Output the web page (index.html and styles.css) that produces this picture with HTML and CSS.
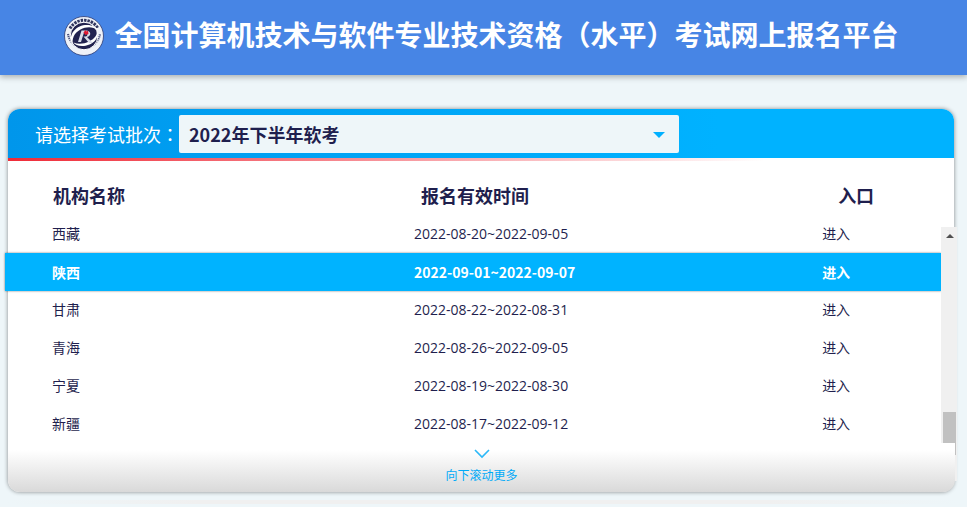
FILE: index.html
```html
<!DOCTYPE html>
<html lang="zh-CN">
<head>
    <meta charset="UTF-8">
    <meta name="viewport" content="width=device-width, initial-scale=1.0">
    <title>全国计算机技术与软件专业技术资格（水平）考试网上报名平台</title>
    <link rel="stylesheet" href="styles.css">
</head>

<body>
    <header class="site-header">
        <svg class="logo" viewBox="0 0 40 40" aria-hidden="true">
            <circle cx="20" cy="20" r="19.5" fill="#eef1f8" stroke="#2c3a72" stroke-width="0.8"/>
            <path d="M6 12.500A16 16 0 0 1 34 12.500" fill="none" stroke="#33375f" stroke-width="3" stroke-dasharray="2.4 1"/>
            <path d="M4 18A16.200 16.200 0 0 0 36 18" fill="none" stroke="#4a4f7c" stroke-width="2.2" stroke-dasharray="1.2 0.8"/>
            <circle cx="20" cy="20" r="13.8" fill="#22224f" stroke="#fff" stroke-width="1"/>
            <path d="M9 29C3 20 11 10 21 9C28 8.500 33 11 33.500 14C29 10.500 22 10.500 16.500 13.500C10 17 7.500 23 9 29Z" fill="#fff"/>
            <path d="M33 14C36 22 29 29 20 30C15 30.500 11 29 9.500 26.500C14 28.500 20 28 25 25.500C31 22.500 33.500 19 33 14Z" fill="#fff"/>
            <path d="M14 26L17.500 14.500H22C27 14.500 28 20 23 21L29 27H25L19.500 20.500H21.500C24 20.500 24 16.500 21.500 16.500H20L17 26Z" fill="#d8dbe8"/>
            <path d="M19.500 16.500L21.500 14L22.500 15.500L24 14.500L24.500 18L21.500 19Z" fill="#df1932"/>
        </svg>
        <h1>全国计算机技术与软件专业技术资格<span class="centered-mark" lang="zh-TW">（</span>水平<span class="centered-mark" lang="zh-TW">）</span>考试网上报名平台</h1>
    </header>

    <main class="panel">
        <div class="batch-bar">
            <label for="batchSelect">请选择考试批次<span class="centered-mark" lang="zh-TW">：</span></label>
            <div class="batch-select">
                <select id="batchSelect">
                    <option>2022年下半年软考</option>
                </select>
            </div>
        </div>
        <div class="red-line"></div>

        <div class="list">
            <table>
                <thead>
                    <tr><th class="col-name">机构名称</th><th class="col-time">报名有效时间</th><th class="col-enter">入口</th></tr>
                </thead>
                <tbody>
                    <tr><td>西藏</td><td>2022-08-20~2022-09-05</td><td><a href="#">进入</a></td></tr>
                    <tr class="active"><td>陕西</td><td>2022-09-01~2022-09-07</td><td><a href="#">进入</a></td></tr>
                    <tr><td>甘肃</td><td>2022-08-22~2022-08-31</td><td><a href="#">进入</a></td></tr>
                    <tr><td>青海</td><td>2022-08-26~2022-09-05</td><td><a href="#">进入</a></td></tr>
                    <tr><td>宁夏</td><td>2022-08-19~2022-08-30</td><td><a href="#">进入</a></td></tr>
                    <tr><td>新疆</td><td>2022-08-17~2022-09-12</td><td><a href="#">进入</a></td></tr>
                </tbody>
            </table>
            <div class="scrollbar">
                <span class="scroll-up"></span>
                <span class="scroll-thumb"></span>
            </div>
        </div>

        <div class="more">
            <svg width="16" height="10" viewBox="0 0 16 10" aria-hidden="true">
                <path d="M1 1L8 8L15 1" fill="none" stroke="#2bb8f8" stroke-width="1.6"/>
            </svg>
            <span>向下滚动更多</span>
        </div>
    </main>

    <div class="bottom-line"></div>
</body>
</html>
```
FILE: styles.css
```css
* {
    box-sizing: border-box;
}

body {
    margin: 0;
    background-color: #eef6f9;
    color: #1f1f4e;
    font-family: "Open Sans", "Noto Sans CJK SC", sans-serif;
    font-size: 14px;
}

.site-header {
    display: flex;
    align-items: center;
    justify-content: center;
    gap: 10px;
    height: 75px;
    padding: 0 4px 4px 0;
    background-color: #4785e5;
    box-shadow: 0 2px 6px rgba(0, 0, 0, 0.3);
}

.logo {
    width: 40px;
    height: 40px;
    flex: none;
}

.site-header h1 {
    margin: 0 0 4px;
    color: #fff;
    font-family: "Noto Sans CJK SC", sans-serif;
    font-size: 28px;
    line-height: 40px;
    white-space: nowrap;
}

.centered-mark {
    font-family: "Noto Sans CJK TC", sans-serif;
}

.panel {
    margin: 34px 13px 0 8px;
    background-color: #fff;
    border-radius: 12px;
    box-shadow: 0 0 4px rgba(0, 0, 0, 0.45);
}

.batch-bar {
    display: flex;
    align-items: center;
    height: 49px;
    padding: 1px 0 0 27px;
    background: linear-gradient(90deg, #0096eb, #00b2ff 75%);
    border-radius: 12px 12px 0 0;
}

.batch-bar label {
    color: #fff;
    font-size: 18px;
    line-height: 38px;
    white-space: nowrap;
}

.batch-select {
    position: relative;
    width: 500px;
}

.batch-select::after {
    content: "";
    position: absolute;
    top: 17px;
    right: 14px;
    border: 6px solid transparent;
    border-top-color: #00b0ff;
    border-bottom: 0;
    pointer-events: none;
}

.batch-select select {
    display: block;
    width: 100%;
    height: 38px;
    padding: 0 30px 0 10px;
    border: none;
    border-radius: 2px;
    appearance: none;
    background-color: #eef6f9;
    color: #1f1f4e;
    font-family: "Noto Sans CJK SC", sans-serif;
    font-size: 18px;
    font-weight: bold;
}

.red-line {
    height: 3px;
    background: linear-gradient(90deg, #ef2b38, #fff 80%);
}

/* the active row and the scrollbar stick out of the panel */
.list {
    display: flex;
    margin: 0 -3px;
}

.list table {
    flex: 1;
    border-collapse: collapse;
    table-layout: fixed;
}

.list th,
.list td {
    padding: 0;
    text-align: left;
}

.list th {
    height: 54px;
    padding: 16px 0 2px;
    font-family: "Noto Sans CJK SC", sans-serif;
    font-size: 18px;
    line-height: 36px;
}

.list td {
    height: 38px;
    line-height: 38px;
}

.list td:first-child {
    padding-left: 47px;
}

.list .col-name {
    width: 43.7%;
    padding-left: 48px;
}

.list .col-time {
    width: 43.6%;
    padding-left: 7px;
}

.list .col-enter {
    padding-left: 16px;
}

.list a {
    color: inherit;
    text-decoration: none;
}

.active {
    background-color: #00b3ff;
    box-shadow: 0 0 2px rgba(0, 0, 0, 0.5);
    color: #fff;
    font-family: "Noto Sans CJK SC", sans-serif;
    font-weight: bold;
}

.scrollbar {
    display: flex;
    flex-direction: column;
    justify-content: space-between;
    width: 16px;
    margin: 66px 0 -38px;
    padding: 7px 1px 26px 2px;
    background-color: #f0f0f0;
}

.scroll-up {
    align-self: center;
    border: 4px solid transparent;
    border-bottom-color: #505050;
    border-top: 0;
}

.scroll-thumb {
    height: 43px;
    background-color: #c1c1c1;
}

.more {
    position: relative;
    display: flex;
    flex-direction: column;
    align-items: center;
    gap: 9px;
    height: 49px;
    margin-right: -1px;
    padding-top: 6px;
    background: linear-gradient(#fff 15%, #d9d9d9);
    border-radius: 0 0 12px 12px;
    color: #00aaf8;
    font-size: 12px;
    line-height: 16px;
}

.bottom-line {
    height: 4px;
    margin: 8px 8px 0;
    background: linear-gradient(90deg, transparent, #f0f0f0 20%, #f0f0f0 80%, transparent);
}
```
